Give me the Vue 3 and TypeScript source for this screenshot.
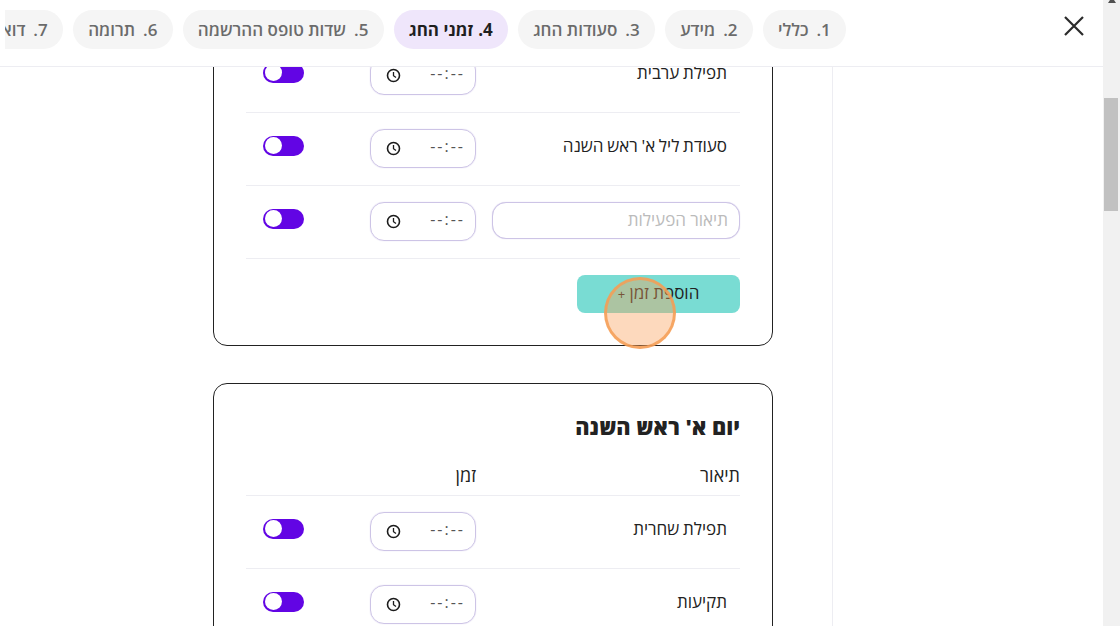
<script setup lang="ts">
interface Day {
  title: string;
  rows: string[];
  extra?: boolean;
}

const tabs = [
  { n: '1.', label: 'כללי' },
  { n: '2.', label: 'מידע' },
  { n: '3.', label: 'סעודות החג' },
  { n: '4.', label: 'זמני החג', active: true },
  { n: '5.', label: 'שדות טופס ההרשמה' },
  { n: '6.', label: 'תרומה' },
  { n: '7.', label: 'דוא"ל' },
];

const days: Day[] = [
  { title: 'ערב ראש השנה', rows: ['תפילת ערבית', "סעודת ליל א' ראש השנה"], extra: true },
  { title: "יום א' ראש השנה", rows: ['תפילת שחרית', 'תקיעות'] },
];
</script>

<template>
  <div class="page">
    <div class="main">
      <header class="top">
        <nav class="tabs" dir="rtl">
          <div v-for="t in tabs" :key="t.n" :class="['tab', { active: t.active }]">
            <span class="num">{{ t.n }}</span>
            <span>{{ t.label }}</span>
          </div>
        </nav>
        <div class="close">
          <svg width="22" height="22" viewBox="0 0 22 22">
            <path d="M2 2 L20 20 M20 2 L2 20" stroke="#2b2b2b" stroke-width="2.2" fill="none" />
          </svg>
        </div>
      </header>

      <div class="content" dir="rtl">
        <aside class="side"></aside>
        <section class="form">
          <div v-for="d in days" :key="d.title" class="card">
            <h2 class="title">{{ d.title }}</h2>
            <div class="head">
              <span>תיאור</span>
              <span>זמן</span>
            </div>
            <div v-for="r in d.rows" :key="r" class="row">
              <div class="desc">{{ r }}</div>
              <div class="time">
                <span class="time-text">--:--</span>
                <svg class="clock" width="15" height="15" viewBox="0 0 15 15">
                  <circle cx="7.5" cy="7.5" r="6" stroke="#1c1c1c" stroke-width="1.6" fill="none" />
                  <path d="M7.5 4 V7.7 L10 9.6" stroke="#1c1c1c" stroke-width="1.3" fill="none" />
                </svg>
              </div>
              <div class="toggle-cell"><div class="toggle"><i></i></div></div>
            </div>
            <div v-if="d.extra" class="row">
              <input class="desc-input" placeholder="תיאור הפעילות" />
              <div class="time">
                <span class="time-text">--:--</span>
                <svg class="clock" width="15" height="15" viewBox="0 0 15 15">
                  <circle cx="7.5" cy="7.5" r="6" stroke="#1c1c1c" stroke-width="1.6" fill="none" />
                  <path d="M7.5 4 V7.7 L10 9.6" stroke="#1c1c1c" stroke-width="1.3" fill="none" />
                </svg>
              </div>
              <div class="toggle-cell"><div class="toggle"><i></i></div></div>
            </div>
            <button v-if="d.extra" class="add"><span>הוספת זמן <small>+</small></span></button>
          </div>
        </section>
      </div>
    </div>

    <div class="scrollbar">
      <span class="arrow"></span>
      <span class="thumb"></span>
    </div>

    <div class="click-mark"></div>
  </div>
</template>

<style scoped>
.page {
  position: relative;
  display: flex;
  width: 1120px;
  height: 626px;
  overflow: hidden;
  background: #fff;
  color: #222;
  font-family: "Open Sans", "Liberation Sans", sans-serif;
}

.main {
  width: 1103px;
  display: flex;
  flex-direction: column;
}

.top {
  position: relative;
  z-index: 2;
  flex: none;
  height: 67px;
  display: flex;
  align-items: flex-start;
  padding-left: 5px;
  background: #fff;
  border-bottom: 1px solid #ededf2;
  box-sizing: border-box;
}

.tabs {
  width: 841px;
  flex: none;
  display: flex;
  gap: 10px;
  padding-top: 10px;
  overflow: hidden;
}

.tab {
  flex: none;
  height: 39px;
  display: flex;
  align-items: center;
  gap: 8px;
  padding: 0 15.2px;
  border-radius: 20px;
  background: #f5f5f5;
  color: #6b6b6b;
  font-size: 17px;
  font-weight: 600;
  white-space: nowrap;
}

.tab.active {
  gap: 5px;
  background: #efe6fb;
  color: #1f1f1f;
  font-weight: 700;
}

.close {
  flex: 1;
  display: flex;
  justify-content: flex-end;
  padding: 15px 18px 0 0;
}

.content {
  flex: 1;
  min-height: 0;
  display: flex;
  overflow: hidden;
}

.side {
  flex: none;
  width: 271px;
  border-left: 1px solid #ededf2;
  box-sizing: border-box;
}

.form {
  padding-right: 59px;
  margin-top: -140px;
  display: flex;
  flex-direction: column;
  gap: 37px;
}

.card {
  width: 560px;
  box-sizing: border-box;
  padding: 0 32px 32px;
  border: 1px solid #222;
  border-radius: 14px;
}

.title {
  margin: 0;
  padding-top: 27px;
  line-height: 32px;
  font-size: 21.7px;
  font-weight: 800;
}

.head {
  height: 53px;
  box-sizing: border-box;
  display: grid;
  grid-template-columns: 248px 106px;
  column-gap: 16px;
  padding-top: 20px;
  font-size: 18px;
  line-height: 24px;
  border-bottom: 1px solid #ededf2;
}

.row {
  height: 73px;
  box-sizing: border-box;
  padding-bottom: 2px;
  display: grid;
  grid-template-columns: 248px 106px 1fr;
  column-gap: 16px;
  align-items: center;
  border-bottom: 1px solid #ededf2;
}

.desc {
  padding-right: 13px;
  padding-bottom: 5px;
  font-size: 17px;
  word-spacing: -0.7px;
}

.desc-input {
  width: 248px;
  height: 37px;
  box-sizing: border-box;
  padding: 0 11px 2px;
  margin-bottom: 1px;
  border: 1px solid #cdc4e6;
  box-shadow: 0 0 1px #cdc4e6;
  border-radius: 14px;
  font: inherit;
  font-size: 17px;
  outline: none;
}

.desc-input::placeholder {
  color: #bbb;
}

.time {
  height: 39px;
  box-sizing: border-box;
  display: flex;
  align-items: center;
  justify-content: space-between;
  padding: 0 10px 0 15px;
  border: 1px solid #cdc4e6;
  box-shadow: 0 0 1px #cdc4e6;
  border-radius: 14px;
}

.time-text {
  direction: ltr;
  font-size: 16px;
  letter-spacing: 2px;
  color: #555;
  margin-bottom: 4px;
}

.clock {
  display: block;
}

.toggle-cell {
  display: flex;
  justify-content: flex-end;
  padding-left: 17px;
  padding-bottom: 5px;
}

.toggle {
  width: 41px;
  height: 20px;
  border-radius: 10px;
  background: #6205e4;
  display: flex;
  align-items: center;
  justify-content: flex-end;
  padding: 0 2px;
  box-sizing: border-box;
}

.toggle i {
  width: 17px;
  height: 17px;
  border-radius: 50%;
  background: #fff;
}

.add {
  display: block;
  width: 163px;
  height: 38px;
  margin-top: 16px;
  padding: 0 0 4px;
  border: none;
  border-radius: 8px;
  background: #79dcd3;
  color: #222;
  font: inherit;
  font-size: 17px;
}

.add small {
  font-size: 13px;
}

.scrollbar {
  position: relative;
  flex: none;
  width: 17px;
  background: #f1f1f1;
}

.arrow {
  position: absolute;
  top: -3px;
  left: 5px;
  border-left: 4px solid transparent;
  border-right: 4px solid transparent;
  border-bottom: 6px solid #505050;
}

.thumb {
  position: absolute;
  top: 98px;
  left: 1px;
  width: 14px;
  height: 113px;
  background: #c1c1c1;
}

.click-mark {
  position: absolute;
  z-index: 3;
  left: 604px;
  top: 277px;
  width: 72px;
  height: 72px;
  box-sizing: border-box;
  border: 3px solid rgba(245, 158, 85, 0.85);
  border-radius: 50%;
  background: rgba(250, 160, 90, 0.4);
}
</style>

<style>
html,
body {
  margin: 0;
  overflow: hidden;
}
</style>
